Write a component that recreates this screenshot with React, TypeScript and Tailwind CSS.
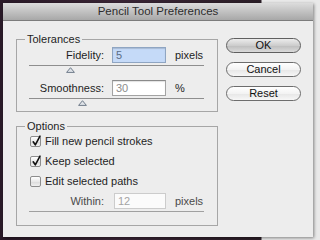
import React from "react";

function Triangle({ ml }: { ml: string }) {
  return (
    <div className={`mt-[1px] h-[6px] ${ml}`}>
      <svg width="9" height="6" viewBox="0 0 9 6" className="block">
        <polygon points="4.5,0.7 8.4,5.4 0.6,5.4" fill="#dfe3e8" stroke="#6f7b8a" strokeWidth="1" />
      </svg>
    </div>
  );
}

function Checkbox({ checked }: { checked: boolean }) {
  return (
    <div className="relative w-[11px] h-[11px] ml-[13px] rounded-[2px] border border-[#8d8d8d] bg-[linear-gradient(#ffffff,#e9e9e9_50%,#dadada_51%,#f0f0f0)] shrink-0">
      {checked && (
        <svg width="11" height="12" viewBox="0 0 11 12" className="absolute left-[0px] top-[-2px] overflow-visible">
          <path d="M2.2 6.8 L4.3 9.8 L9 1.2" fill="none" stroke="#111" strokeWidth="1.6" strokeLinecap="round" strokeLinejoin="round" />
        </svg>
      )}
    </div>
  );
}

export default function App() {
  return (
    <div className="w-[320px] h-[240px] overflow-hidden bg-[linear-gradient(to_right,#2a1a28_0px,#3a2535_120px,#2c1f28_261px,#e9e9e9_262px)] pt-[3px] pl-[3px] font-['Liberation_Sans',Arial,sans-serif]">
      <div className="w-[310px] h-[234px] bg-[#ededed] shadow-[1px_1px_3px_rgba(0,0,0,0.45)] flex flex-col">
        <div className="h-[18px] shrink-0 bg-[linear-gradient(#dcdcdc,#a8a8a8)] border-b border-[#7c7c7c] flex items-center justify-center text-[11.5px] text-[#2c2c2c] leading-none">
          Pencil Tool Preferences
        </div>
        <div className="flex pl-[13px]">
          <div className="w-[202px] flex flex-col">
            <fieldset className="mt-[12px] border border-[#a6a6a6] pb-[5px]">
              <legend className="ml-[8px] px-[2px] text-[11px] leading-[12px] text-[#1e1e1e]">Tolerances</legend>
              <div className="mt-[2px] h-[16px] flex items-center text-[11px] text-[#1e1e1e]">
                <div className="w-[87px] text-right">Fidelity:</div>
                <div className="ml-[8px] w-[54px] h-[16px] bg-[#c5daf8] border border-[#8fa5c2] shadow-[inset_0_1px_1px_rgba(0,0,0,0.15)] pl-[3px] flex items-center text-[#5c6d85]">5</div>
                <div className="ml-[9px]">pixels</div>
              </div>
              <div className="mt-[2px] ml-[12px] w-[175px] h-px bg-[#8e8e8e]" />
              <Triangle ml="ml-[49px]" />
              <div className="mt-[7px] h-[16px] flex items-center text-[11px] text-[#1e1e1e]">
                <div className="w-[87px] text-right">Smoothness:</div>
                <div className="ml-[8px] w-[54px] h-[16px] bg-white border border-[#a3a3a3] border-t-[#8a8a8a] shadow-[inset_0_1px_1px_rgba(0,0,0,0.12)] pl-[3px] flex items-center text-[#8c8c8c]">30</div>
                <div className="ml-[9px]">%</div>
              </div>
              <div className="mt-[2px] ml-[12px] w-[175px] h-px bg-[#8e8e8e]" />
              <Triangle ml="ml-[61px]" />
            </fieldset>
            <fieldset className="mt-[8px] border border-[#a6a6a6] pb-[13px]">
              <legend className="ml-[8px] px-[2px] text-[11px] leading-[12px] text-[#1e1e1e]">Options</legend>
              <div className="mt-[4px] h-[11px] flex items-center text-[11px] text-[#1e1e1e]">
                <Checkbox checked={true} />
                <div className="ml-[4px]">Fill new pencil strokes</div>
              </div>
              <div className="mt-[9px] h-[11px] flex items-center text-[11px] text-[#1e1e1e]">
                <Checkbox checked={true} />
                <div className="ml-[4px]">Keep selected</div>
              </div>
              <div className="mt-[9px] h-[11px] flex items-center text-[11px] text-[#1e1e1e]">
                <Checkbox checked={false} />
                <div className="ml-[4px]">Edit selected paths</div>
              </div>
              <div className="mt-[6px] h-[16px] flex items-center text-[11px] text-[#4a4a4a]">
                <div className="w-[87px] text-right">Within:</div>
                <div className="ml-[10px] w-[52px] h-[16px] bg-[#fbfbfb] border border-[#cccccc] pl-[3px] flex items-center text-[#a4a4a4]">12</div>
                <div className="ml-[9px]">pixels</div>
              </div>
              <div className="mt-[2px] ml-[12px] w-[175px] h-px bg-[#a0a0a0]" />
            </fieldset>
          </div>
          <div className="ml-[8px] mt-[17px] w-[75px] flex flex-col gap-[9px]">
            <div className="h-[15px] rounded-full border border-[#5f5f5f] bg-[linear-gradient(#ececec,#cdcdcd_50%,#bdbdbd_51%,#dadada)] flex items-center justify-center text-[11px] leading-none text-[#111]">OK</div>
            <div className="h-[15px] rounded-full border border-[#6d6d6d] bg-[linear-gradient(#ffffff,#f3f3f3_50%,#e6e6e6_51%,#f7f7f7)] flex items-center justify-center text-[11px] leading-none text-[#111]">Cancel</div>
            <div className="h-[15px] rounded-full border border-[#6d6d6d] bg-[linear-gradient(#ffffff,#f3f3f3_50%,#e6e6e6_51%,#f7f7f7)] flex items-center justify-center text-[11px] leading-none text-[#111]">Reset</div>
          </div>
        </div>
      </div>
    </div>
  );
}
